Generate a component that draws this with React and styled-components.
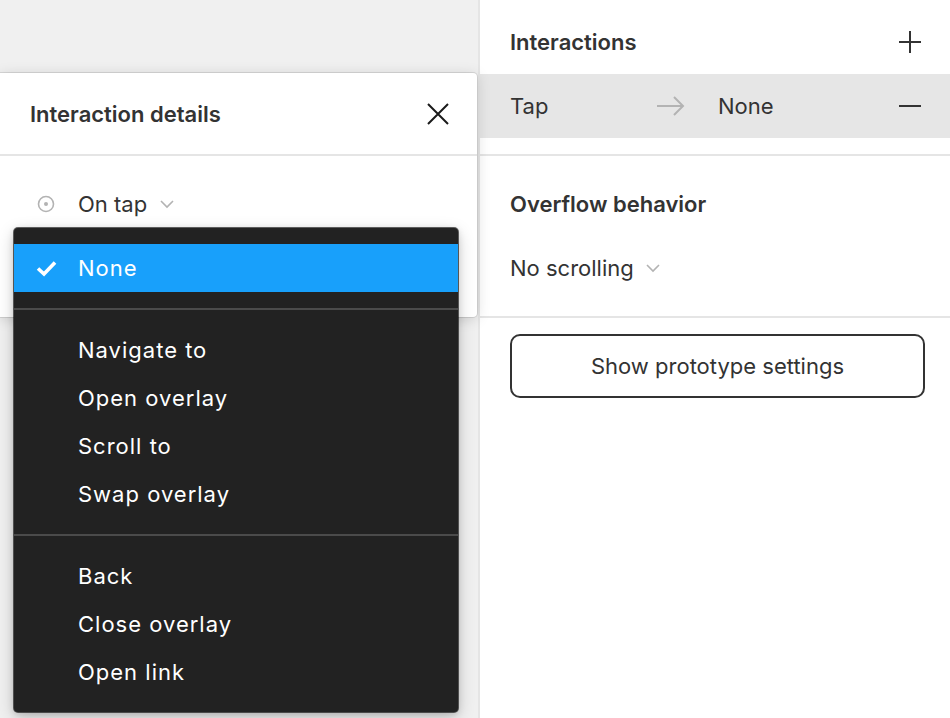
import React from 'react'
import styled, { createGlobalStyle } from 'styled-components'

const GlobalStyle = createGlobalStyle`
  html, body {
    margin: 0;
    padding: 0;
  }
  body {
    font-family: Inter, 'Noto Sans', sans-serif;
    font-size: 22px;
    color: #333;
    -webkit-font-smoothing: antialiased;
  }
`

const menuGroups = [
  ['None'],
  ['Navigate to', 'Open overlay', 'Scroll to', 'Swap overlay'],
  ['Back', 'Close overlay', 'Open link'],
]

const CloseIcon = () => (
  <svg width="22" height="22" viewBox="0 0 22 22">
    <path d="M1 1 L21 21 M21 1 L1 21" stroke="#1a1a1a" strokeWidth="2" fill="none" />
  </svg>
)

const PlusIcon = () => (
  <svg width="22" height="22" viewBox="0 0 22 22">
    <path d="M11 0 V22 M0 11 H22" stroke="#333" strokeWidth="2" fill="none" />
  </svg>
)

const MinusIcon = () => (
  <svg width="22" height="22" viewBox="0 0 22 22">
    <path d="M0 11 H22" stroke="#333" strokeWidth="2" fill="none" />
  </svg>
)

const ArrowIcon = () => (
  <svg width="28" height="20" viewBox="0 0 28 20">
    <path d="M0 10 H26 M17 1 L26 10 L17 19" stroke="#b3b3b3" strokeWidth="2" fill="none" />
  </svg>
)

const Chevron = () => (
  <svg width="14" height="9" viewBox="0 0 14 9">
    <path d="M1 1 L7 7 L13 1" stroke="#b3b3b3" strokeWidth="1.6" fill="none" />
  </svg>
)

const TriggerIcon = () => (
  <svg width="18" height="18" viewBox="0 0 18 18">
    <circle cx="9" cy="9" r="7.5" stroke="#b3b3b3" strokeWidth="1.6" fill="none" />
    <circle cx="9" cy="9" r="2" fill="#b3b3b3" />
  </svg>
)

const CheckIcon = () => (
  <svg width="21" height="17" viewBox="0 0 21 17">
    <path d="M2 8.5 L8 14 L19 2.5" stroke="#fff" strokeWidth="3.6" fill="none" />
  </svg>
)

export default function App() {
  return (
    <>
      <GlobalStyle />
      <Page>
        <Canvas>
          <DetailsPanel>
            <PanelHeader>
              <span>Interaction details</span>
              <IconButton>
                <CloseIcon />
              </IconButton>
            </PanelHeader>
            <TriggerRow>
              <TriggerIcon />
              <TriggerLabel>On tap</TriggerLabel>
              <Chevron />
            </TriggerRow>
          </DetailsPanel>

          <Menu>
            {menuGroups.map((group, gi) => (
              <React.Fragment key={gi}>
                {gi > 0 && <MenuSeparator />}
                {group.map((label) => {
                  const selected = label === 'None'
                  return (
                    <MenuItem key={label} $selected={selected}>
                      <CheckSlot>{selected && <CheckIcon />}</CheckSlot>
                      {label}
                    </MenuItem>
                  )
                })}
              </React.Fragment>
            ))}
          </Menu>
        </Canvas>

        <Sidebar>
          <InteractionsSection>
            <SectionHeader>
              <Title>Interactions</Title>
              <IconButton>
                <PlusIcon />
              </IconButton>
            </SectionHeader>
            <InteractionRow>
              <span>Tap</span>
              <ArrowIcon />
              <span>None</span>
              <IconButton>
                <MinusIcon />
              </IconButton>
            </InteractionRow>
          </InteractionsSection>

          <OverflowSection>
            <SectionHeader>
              <Title>Overflow behavior</Title>
            </SectionHeader>
            <SelectRow>
              <span>No scrolling</span>
              <Chevron />
            </SelectRow>
          </OverflowSection>

          <ButtonSection>
            <OutlineButton>Show prototype settings</OutlineButton>
          </ButtonSection>
        </Sidebar>
      </Page>
    </>
  )
}

const Page = styled.div`
  display: flex;
  width: 950px;
  height: 718px;
  overflow: hidden;
`

const Canvas = styled.div`
  position: relative;
  z-index: 2;
  flex: none;
  width: 478px;
  background: #f0f0f0;
`

const DetailsPanel = styled.div`
  position: absolute;
  top: 73px;
  left: 0;
  width: 477px;
  height: 244px;
  background: #fff;
  border-radius: 0 4px 4px 0;
  box-shadow: 0 0 0 1px rgba(0, 0, 0, 0.1), 0 2px 14px rgba(0, 0, 0, 0.15);
`

const PanelHeader = styled.div`
  display: flex;
  align-items: center;
  justify-content: space-between;
  height: 81px;
  padding: 0 28px 0 30px;
  border-bottom: 2px solid #e5e5e5;
  font-weight: 600;
`

const IconButton = styled.div`
  display: flex;
  align-items: center;
  justify-content: center;
  width: 22px;
  height: 22px;
`

const TriggerRow = styled.div`
  display: flex;
  align-items: center;
  height: 64px;
  margin-top: 16px;
  padding-left: 37px;
`

const TriggerLabel = styled.span`
  margin: 0 13px 0 23px;
`

const Menu = styled.div`
  position: absolute;
  top: 228px;
  left: 14px;
  width: 444px;
  padding: 16px 0;
  background: #222;
  border-radius: 4px;
  box-shadow: 0 0 0 1px rgba(0, 0, 0, 0.6), 0 5px 17px rgba(0, 0, 0, 0.2), 0 2px 7px rgba(0, 0, 0, 0.15);
`

const MenuItem = styled.div`
  display: flex;
  align-items: center;
  height: 48px;
  padding-left: 22px;
  color: #fff;
  letter-spacing: 1px;
  background: ${({ $selected }) => ($selected ? '#18a0fb' : 'transparent')};
`

const CheckSlot = styled.span`
  display: flex;
  align-items: center;
  width: 42px;
`

const MenuSeparator = styled.div`
  height: 2px;
  margin: 16px 0;
  background: #4b4b4b;
`

const Sidebar = styled.div`
  flex: 1;
  display: flex;
  flex-direction: column;
  background: #fff;
  border-left: 2px solid #e5e5e5;
`

const InteractionsSection = styled.div`
  padding: 10px 0 16px;
  border-bottom: 2px solid #e5e5e5;
`

const SectionHeader = styled.div`
  display: flex;
  align-items: center;
  justify-content: space-between;
  height: 64px;
  padding: 0 29px 0 30px;
`

const Title = styled.span`
  font-weight: 600;
`

const InteractionRow = styled.div`
  display: grid;
  grid-template-columns: 147px 61px 1fr auto;
  align-items: center;
  height: 64px;
  padding: 0 29px 0 30px;
  background: #e6e6e6;
`

const OverflowSection = styled.div`
  padding: 16px 0;
  border-bottom: 2px solid #e5e5e5;
`

const SelectRow = styled.div`
  display: flex;
  align-items: center;
  gap: 12px;
  height: 64px;
  padding-left: 30px;
`

const ButtonSection = styled.div`
  padding: 16px 25px 0 30px;
`

const OutlineButton = styled.button`
  width: 100%;
  height: 64px;
  border: 2px solid #333;
  border-radius: 10px;
  background: #fff;
  font-family: inherit;
  font-size: 22px;
  color: #333;
`
